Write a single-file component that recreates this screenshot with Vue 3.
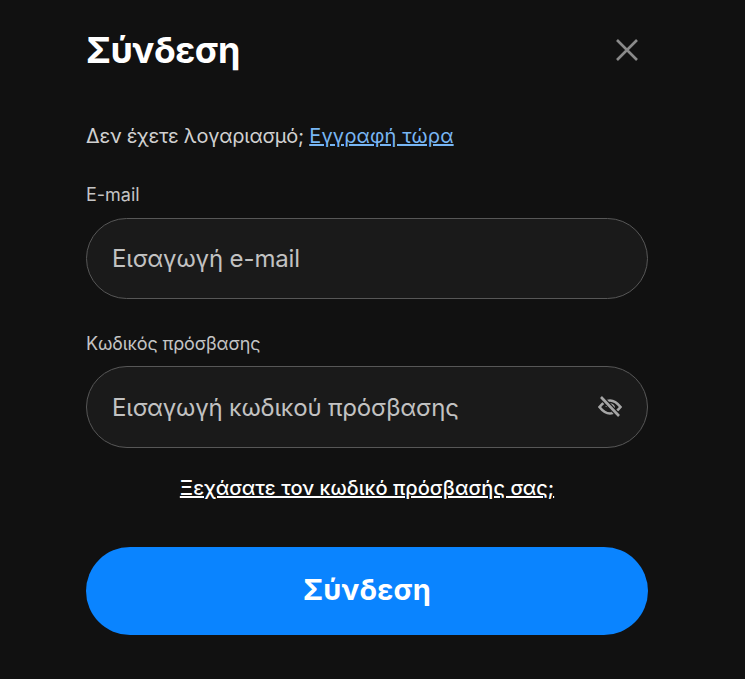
<script setup>
const title = 'Σύνδεση'
</script>

<template>
  <div class="page">
    <div class="head">
      <h1>{{ title }}</h1>
      <svg class="close" width="24" height="24" viewBox="0 0 24 24" fill="none" stroke="#8a8a8a" stroke-width="2.6">
        <path d="M2 2 L22 22 M22 2 L2 22" />
      </svg>
    </div>
    <p class="signup">Δεν έχετε λογαριασμό; <a href="#">Εγγραφή τώρα</a></p>
    <label class="lbl">E-mail</label>
    <div class="field"><span class="ph">Εισαγωγή e-mail</span></div>
    <label class="lbl second">Κωδικός πρόσβασης</label>
    <div class="field tall">
      <span class="ph long">Εισαγωγή κωδικού πρόσβασης</span>
      <svg width="24" height="24" viewBox="0 0 24 24" fill="none" stroke="#a6a6a6" stroke-width="2.6">
        <path d="M1.5 12 C5 7.5 8.5 5.5 12 5.5 C15.5 5.5 19 7.5 22.5 12 C19 16.5 15.5 18.5 12 18.5 C8.5 18.5 5 16.5 1.5 12 Z" />
        <path d="M8.5 12 A3.8 3.8 0 0 1 15.8 12 A3.8 3.8 0 0 1 13 15.6" stroke-width="2.2" />
        <path d="M3 2 L21 21" stroke="#1a1a1a" stroke-width="5" />
        <path d="M3 2 L21 21" stroke-width="2.6" />
      </svg>
    </div>
    <a class="forgot" href="#">Ξεχάσατε τον κωδικό πρόσβασής σας;</a>
    <button class="submit">{{ title }}</button>
  </div>
</template>

<style scoped>
.page {
  box-sizing: border-box;
  width: 745px;
  height: 679px;
  padding: 24px 97px 0 86px;
  background: #111111;
  font-family: Inter, "Noto Sans", sans-serif;
  overflow: hidden;
}
.head {
  display: flex;
  justify-content: space-between;
  align-items: center;
  height: 52px;
  padding-right: 9px;
}
h1 {
  margin: 0;
  color: #ffffff;
  font-size: 36px;
  font-weight: 700;
  line-height: 52px;
  letter-spacing: -0.5px;
}
.signup {
  margin: 46px 0 0;
  color: #d0d0d0;
  font-size: 20px;
  line-height: 28px;
  letter-spacing: -0.24px;
}
.signup a {
  color: #78b6f4;
  letter-spacing: 0.13px;
  text-decoration-thickness: 2px;
}
.lbl {
  display: block;
  margin-top: 34px;
  margin-bottom: 12px;
  color: #c4c4c4;
  font-size: 18px;
  line-height: 22px;
}
.second {
  margin-top: 34px;
  margin-bottom: 11px;
  letter-spacing: -0.15px;
}
.field {
  box-sizing: border-box;
  display: flex;
  align-items: center;
  justify-content: space-between;
  height: 81px;
  padding: 0 25px;
  background: #1a1a1a;
  border: 1px solid #575757;
  border-radius: 41px;
}
.tall {
  height: 82px;
}
.ph {
  color: #c2c2c2;
  font-size: 24px;
  letter-spacing: -0.13px;
}
.long {
  letter-spacing: -0.19px;
}
.forgot {
  display: block;
  margin-top: 26px;
  color: #ffffff;
  font-size: 20px;
  font-weight: 500;
  line-height: 28px;
  letter-spacing: 0.05px;
  text-align: center;
  text-decoration-thickness: 2px;
}
.submit {
  display: block;
  width: 100%;
  height: 88px;
  margin-top: 45px;
  padding: 0 0 4px;
  border: 0;
  border-radius: 44px;
  background: #0a84ff;
  color: #ffffff;
  font-family: inherit;
  font-size: 29px;
  font-weight: 700;
  letter-spacing: 0.2px;
}
</style>
